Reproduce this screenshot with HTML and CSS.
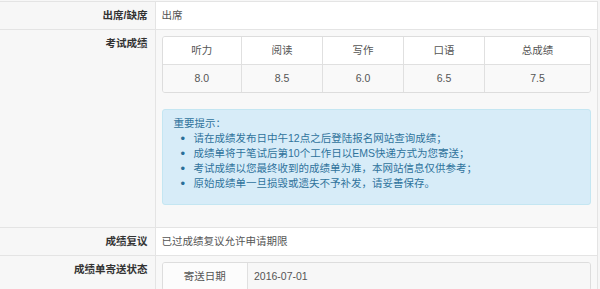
FILE: index.html
```html
<!DOCTYPE html>
<html lang="zh-CN">
<head>
<meta charset="utf-8">
<title>成绩</title>
<link rel="stylesheet" href="styles.css">
</head>
<body>
<div class="page">
  <div class="prev-row"></div>
  <table class="info">
    <colgroup><col class="col-label"><col class="col-value"></colgroup>
    <tbody>
      <tr class="odd">
        <th>出席/缺席</th>
        <td>出席</td>
      </tr>
      <tr class="even">
        <th>考试成绩</th>
        <td>
          <table class="scores">
            <thead>
              <tr><th>听力</th><th>阅读</th><th>写作</th><th>口语</th><th>总成绩</th></tr>
            </thead>
            <tbody>
              <tr><td>8.0</td><td>8.5</td><td>6.0</td><td>6.5</td><td>7.5</td></tr>
            </tbody>
          </table>
          <div class="alert">
            <div class="alert-title">重要提示：</div>
            <ul>
              <li>请在成绩发布日中午12点之后登陆报名网站查询成绩；</li>
              <li>成绩单将于笔试后第10个工作日以EMS快递方式为您寄送；</li>
              <li>考试成绩以您最终收到的成绩单为准，本网站信息仅供参考；</li>
              <li>原始成绩单一旦损毁或遗失不予补发，请妥善保存。</li>
            </ul>
          </div>
        </td>
      </tr>
      <tr class="odd">
        <th>成绩复议</th>
        <td>已过成绩复议允许申请期限</td>
      </tr>
      <tr class="even">
        <th>成绩单寄送状态</th>
        <td>
          <table class="status">
            <tbody>
              <tr><th>寄送日期</th><td>2016-07-01</td></tr>
            </tbody>
          </table>
        </td>
      </tr>
    </tbody>
  </table>
</div>
</body>
</html>
```

FILE: styles.css
```css
html, body {
  margin: 0;
  padding: 0;
  background: #f6f6f6;
}

body {
  font-family: "Liberation Sans", "Noto Sans CJK SC", sans-serif;
  font-size: 10.5px;
  line-height: 15px;
  color: #555;
}

.page {
  width: 598px;
}

.prev-row {
  height: 1px;
  background: #f7f7f7;
}

.info {
  width: 598px;
  border-collapse: collapse;
  table-layout: fixed;
  border-right: 1px solid #e4e4e4;
}

.col-label { width: 155px; }

.info > tbody > tr > th,
.info > tbody > tr > td {
  border-top: 1px solid #e4e4e4;
  padding: 6px;
  vertical-align: top;
}

.info > tbody > tr > th {
  text-align: right;
  font-weight: bold;
  color: #333;
  background: #f7f7f7;
  padding-right: 7px;
  border-right: 1px solid #e4e4e4;
}

.info > tbody > tr.odd > td { background: #fff; }
.info > tbody > tr.even > td { background: #f8f8f8; }

.scores,
.status {
  width: 100%;
  border-collapse: separate;
  border-spacing: 0;
  border: 1px solid #dddddd;
  border-radius: 3px;
  overflow: hidden;
}

.scores {
  margin-bottom: 16px;
}

.scores th,
.scores td {
  padding: 6px;
  text-align: center;
  font-weight: normal;
  color: #555;
  border-left: 1px solid #e0e0e0;
}

.scores th:first-child,
.scores td:first-child { border-left: none; }

.scores thead th { background: #fff; }

.scores tbody td {
  background: #f9f9f9;
  border-top: 1px solid #e0e0e0;
}

.status th,
.status td {
  padding: 6px;
  font-weight: normal;
  color: #555;
}

.status th {
  width: 20%;
  text-align: center;
  background: #fcfcfc;
  border-right: 1px solid #e0e0e0;
}

.status td {
  text-align: left;
  background: #f7f7f7;
}

.alert {
  background: #d7ecf8;
  border: 1px solid #c4e6f2;
  border-radius: 3px;
  color: #2f739c;
  padding: 6px 11px;
  margin-bottom: 16px;
}

.alert ul {
  margin: 0 0 7px;
  padding-left: 20px;
  list-style: none;
}

.alert li::before {
  content: "•";
  display: inline-block;
  width: 13px;
  margin-left: -13px;
  font-size: 13px;
  line-height: 15px;
  height: 15px;
  vertical-align: top;
  color: #2a6f99;
}
```
